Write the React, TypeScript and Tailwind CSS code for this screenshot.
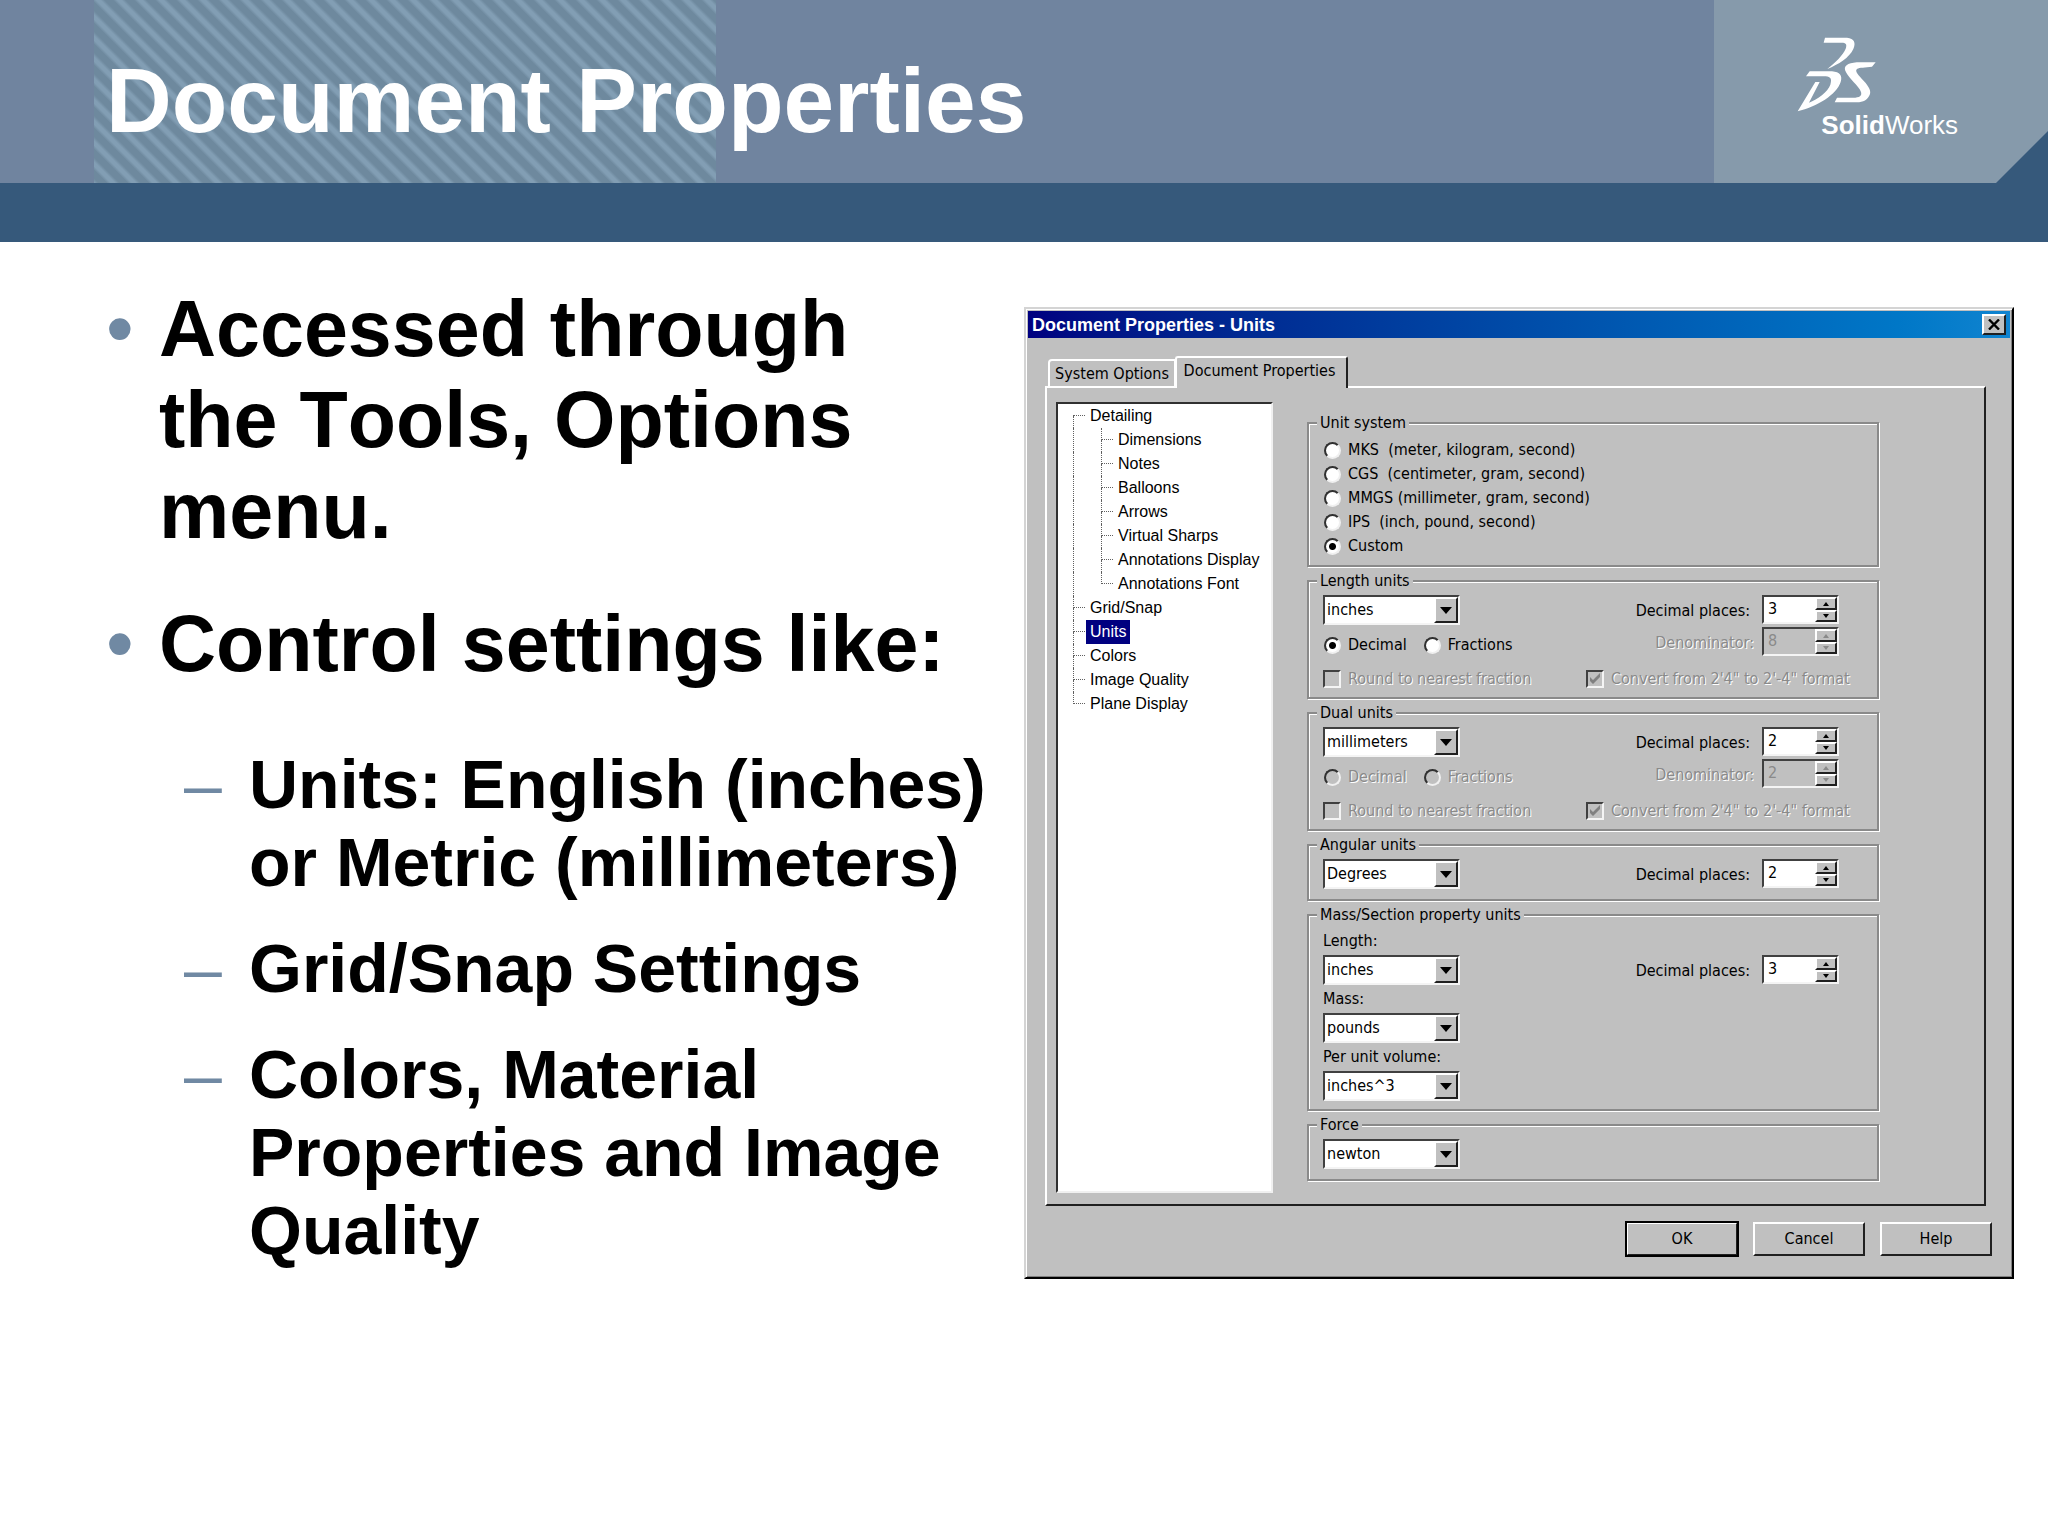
import React, { useState } from "react";
import clsx from "clsx";

const sunken = "border-2 border-t-[#404040] border-l-[#404040] border-b-[#f4f4f4] border-r-[#f4f4f4]";
const raised = "border-2 border-t-white border-l-white border-b-[#202020] border-r-[#202020] bg-[#c0c0c0]";
const disabledText = "text-[#8a8a8a] [text-shadow:1px_1px_0_#fff]";

const Logo: React.FC = () => (
  <svg className="w-[176px] h-[120px]" viewBox="290 105 528 360" fill="#fff" role="img" aria-label="SolidWorks">
    <path d="M374 113H440C462 115 467 128 459 147C447 173 415 193 381 207C405 187 428 166 436 146C441 132 436 128 424 128H370Z" />
    <path d="M526 187L515 200C495 202 476 203 471 206C463 211 470 220 484 236C502 254 513 270 509 282C503 300 488 307 470 307H403L410 293H465C482 292 488 284 478 268C466 250 440 228 434 210C430 194 450 187 480 187Z" />
    <path d="M328 214H395C419 216 427 228 421 246C409 284 350 320 292 334L345 246H358L326 308C352 298 382 276 390 254C395 238 392 230 376 229H317Z" />
    <text x="363" y="402" fontSize="78" fontFamily="'Liberation Sans', sans-serif">
      <tspan fontWeight="700">Solid</tspan>
      <tspan>Works</tspan>
    </text>
  </svg>
);

const SlideHeader: React.FC = () => (
  <header className="bg-[#36597b] pb-[59px]">
    <div className="flex h-[183px] bg-[#70849f]">
      <div className="ml-[94px] w-[622px] flex items-center bg-[length:21px_21px] bg-[linear-gradient(45deg,#7893a9_0%,#829eb4_5%,#829eb4_15%,#6e899e_25%,#6e899e_45%,#829eb4_55%,#829eb4_65%,#6e899e_75%,#6e899e_95%,#7893a9_100%)]">
        <h1 className="ml-3 mt-[18px] text-[91px] leading-[104px] font-bold text-white whitespace-nowrap">
          Document Properties
        </h1>
      </div>
      <div className="ml-auto w-[334px] bg-[#36597b]">
        <div className="h-full pl-[83px] pt-[35px] bg-[#869aab] [clip-path:polygon(0_0,100%_0,100%_131px,282px_100%,0_100%)]">
          <Logo />
        </div>
      </div>
    </div>
  </header>
);

const Bullets: React.FC = () => (
  <ul className="flex flex-col gap-[42px] text-[79px] leading-[91px] font-bold text-black [font-kerning:none]">
    <li className="flex">
      <span className="w-[53px] shrink-0 font-normal text-[#7089a3]">•</span>
      <span>Accessed through the Tools, Options menu.</span>
    </li>
    <li>
      <div className="flex">
        <span className="w-[53px] shrink-0 font-normal text-[#7089a3]">•</span>
        <span>Control settings like:</span>
      </div>
      <ul className="mt-14 ml-[78px] flex flex-col gap-7 text-[68px] leading-[78px]">
        {["Units: English (inches) or Metric (millimeters)", "Grid/Snap Settings", "Colors, Material Properties and Image Quality"].map((text) => (
          <li key={text} className="flex">
            <span className="w-[65px] shrink-0 font-normal text-[#7089a3]">–</span>
            <span>{text}</span>
          </li>
        ))}
      </ul>
    </li>
  </ul>
);

interface TreeItem {
  label: string;
  child?: boolean;
  last?: boolean;
}

const treeItems: TreeItem[] = [
  { label: "Detailing" },
  { label: "Dimensions", child: true },
  { label: "Notes", child: true },
  { label: "Balloons", child: true },
  { label: "Arrows", child: true },
  { label: "Virtual Sharps", child: true },
  { label: "Annotations Display", child: true },
  { label: "Annotations Font", child: true, last: true },
  { label: "Grid/Snap" },
  { label: "Units" },
  { label: "Colors" },
  { label: "Image Quality" },
  { label: "Plane Display", last: true },
];

const Tree: React.FC = () => {
  const [selected, setSelected] = useState("Units");

  return (
    <ul className="w-[217px] shrink-0 bg-white border-2 border-t-[#303030] border-l-[#303030] border-b-[#f0f0f0] border-r-[#f0f0f0] pl-[15px] text-[16px] leading-6">
      {treeItems.map(({ label, child, last }, i) => (
        <li key={label} className="flex h-6">
          {child && <span className="w-7 border-l border-dotted border-[#606060]" />}
          <span className="w-3 flex flex-col">
            <span className={clsx("h-3 border-b border-dotted border-[#606060]", i > 0 && "border-l")} />
            <span className={clsx("h-3 border-dotted border-[#606060]", !last && "border-l")} />
          </span>
          <button
            type="button"
            onClick={() => setSelected(label)}
            className={clsx("ml-px px-1 whitespace-nowrap", selected === label ? "bg-[#000080] text-white" : "text-black")}
          >
            {label}
          </button>
        </li>
      ))}
    </ul>
  );
};

const Group: React.FC<{ title: string; className?: string; children: React.ReactNode }> = ({ title, className, children }) => (
  <fieldset className={clsx("border-2 border-[#8a8a8a] px-[14px] shadow-[1px_1px_0_#fff,inset_1px_1px_0_#fff]", className)}>
    <legend className="-ml-1.5 px-[3px] h-5 leading-5 bg-[#c0c0c0]">{title}</legend>
    {children}
  </fieldset>
);

const Combo: React.FC<{ id: string; label: string; options: string[] }> = ({ id, label, options }) => (
  <span className={clsx("grid w-[137px] h-[30px] bg-white", sunken)}>
    <select id={id} aria-label={label} className="[grid-area:1/1] appearance-none bg-transparent pl-0.5 text-black outline-none">
      {options.map((option) => (
        <option key={option}>{option}</option>
      ))}
    </select>
    <span className={clsx("[grid-area:1/1] justify-self-end w-6 flex items-center justify-center pointer-events-none", raised)}>
      <svg className="w-3 h-[7px]" viewBox="0 0 12 7">
        <path d="M0 0H12L6 7Z" />
      </svg>
    </span>
  </span>
);

const Spinner: React.FC<{ id: string; label: string; value: number; disabled?: boolean }> = ({ id, label, value, disabled }) => {
  const [current, setCurrent] = useState(value);
  const arrow = disabled ? "#8a8a8a" : "#000";

  return (
    <div className="flex items-start">
      <label htmlFor={id} className={clsx("mt-1 leading-6", disabled ? "mr-2 " + disabledText : "mr-3")}>
        {label}
      </label>
      <span className={clsx("flex w-[77px] h-[29px]", sunken, disabled ? "bg-[#c0c0c0]" : "bg-white")}>
        <input
          id={id}
          value={current}
          disabled={disabled}
          onChange={(e) => setCurrent(Number(e.target.value) || 0)}
          className={clsx("w-0 grow pl-1 pb-0.5 bg-transparent outline-none", disabled ? "text-[#8a8a8a]" : "text-black")}
        />
        <span className="w-[22px] flex flex-col">
          <button type="button" aria-label="Increase" disabled={disabled} onClick={() => setCurrent(current + 1)} className={clsx("h-[13px] flex items-center justify-center", raised)}>
            <svg className="w-[6px] h-1" viewBox="0 0 6 4" fill={arrow}>
              <path d="M0 4L3 0L6 4Z" />
            </svg>
          </button>
          <button type="button" aria-label="Decrease" disabled={disabled} onClick={() => setCurrent(current - 1)} className={clsx("h-3 flex items-center justify-center", raised)}>
            <svg className="w-[6px] h-1" viewBox="0 0 6 4" fill={arrow}>
              <path d="M0 0L3 4L6 0Z" />
            </svg>
          </button>
        </span>
      </span>
    </div>
  );
};

interface ToggleProps {
  label: string;
  name?: string;
  checked?: boolean;
  disabled?: boolean;
}

const Radio: React.FC<ToggleProps> = ({ label, name, checked, disabled }) => (
  <label className={clsx("flex items-center whitespace-pre leading-6", disabled && disabledText)}>
    <input
      type="radio"
      name={name}
      defaultChecked={checked}
      disabled={disabled}
      className="appearance-none ml-px mr-[7px] size-[17px] rounded-full border-2 border-t-[#303030] border-l-[#303030] border-b-[#f0f0f0] border-r-[#f0f0f0] bg-white disabled:bg-[#c0c0c0] checked:bg-[radial-gradient(circle,#000_3px,#fff_4px)]"
    />
    {label}
  </label>
);

const Check: React.FC<ToggleProps> = ({ label, checked, disabled }) => (
  <label className={clsx("flex items-center whitespace-nowrap leading-6", disabled && disabledText)}>
    <span className="grid mr-[7px] size-[18px]">
      <input
        type="checkbox"
        defaultChecked={checked}
        disabled={disabled}
        className={clsx("peer [grid-area:1/1] appearance-none bg-white disabled:bg-[#c0c0c0]", sunken)}
      />
      <svg className="[grid-area:1/1] m-[3px] size-3 invisible peer-checked:visible pointer-events-none" viewBox="0 0 12 12">
        <path d="M1 4L4 7L11 0V4L4 11L1 8Z" fill="#808080" />
      </svg>
    </span>
    {label}
  </label>
);

interface LinearUnitsProps {
  title: string;
  id: string;
  options: string[];
  places: number;
  denominator: number;
  formatDisabled?: boolean;
}

// length and dual units share one form; dual has its radio pair disabled
const LinearUnits: React.FC<LinearUnitsProps> = ({ title, id, options, places, denominator, formatDisabled }) => (
  <Group title={title} className="pt-1 pb-0.5">
    <div className="flex h-8 justify-between pr-6">
      <Combo id={id} label={title} options={options} />
      <Spinner id={`${id}-places`} label="Decimal places:" value={places} />
    </div>
    <div className="flex h-9 justify-between pr-6">
      <div className="flex items-center gap-4">
        <Radio name={`${id}-format`} label="Decimal" checked={!formatDisabled} disabled={formatDisabled} />
        <Radio name={`${id}-format`} label="Fractions" disabled={formatDisabled} />
      </div>
      <Spinner id={`${id}-denominator`} label="Denominator:" value={denominator} disabled />
    </div>
    <div className="flex h-8 items-center">
      <div className="w-[263px]">
        <Check label="Round to nearest fraction" disabled />
      </div>
      <Check label={`Convert from 2'4" to 2'-4" format`} checked disabled />
    </div>
  </Group>
);

const UnitsForm: React.FC = () => (
  <div className="grow ml-[34px] mr-[105px] pt-[11px] pb-3 flex flex-col gap-1">
    <Group title="Unit system" className="pt-[5px] pb-[7px]">
      <Radio name="system" label="MKS  (meter, kilogram, second)" />
      <Radio name="system" label="CGS  (centimeter, gram, second)" />
      <Radio name="system" label="MMGS (millimeter, gram, second)" />
      <Radio name="system" label="IPS  (inch, pound, second)" />
      <Radio name="system" label="Custom" checked />
    </Group>
    <LinearUnits title="Length units" id="length" options={["inches", "millimeters"]} places={3} denominator={8} />
    <LinearUnits title="Dual units" id="dual" options={["millimeters", "inches"]} places={2} denominator={2} formatDisabled />
    <Group title="Angular units" className="pt-1 pb-2">
      <div className="flex h-8 justify-between pr-6">
        <Combo id="angular" label="Angular units" options={["Degrees", "Radians"]} />
        <Spinner id="angular-places" label="Decimal places:" value={2} />
      </div>
    </Group>
    <Group title="Mass/Section property units" className="pt-0.5 pb-2">
      <label htmlFor="mass-length" className="block leading-7">Length:</label>
      <div className="flex h-[30px] justify-between pr-6">
        <Combo id="mass-length" label="Length" options={["inches", "millimeters"]} />
        <Spinner id="mass-places" label="Decimal places:" value={3} />
      </div>
      <label htmlFor="mass" className="block leading-7">Mass:</label>
      <Combo id="mass" label="Mass" options={["pounds", "grams"]} />
      <label htmlFor="volume" className="block leading-7">Per unit volume:</label>
      <Combo id="volume" label="Per unit volume" options={["inches^3", "millimeters^3"]} />
    </Group>
    <Group title="Force" className="pt-1 pb-2">
      <div className="h-8">
        <Combo id="force" label="Force" options={["newton", "pound-force"]} />
      </div>
    </Group>
  </div>
);

const DialogButton: React.FC<{ label: string; primary?: boolean }> = ({ label, primary }) => (
  <button type="button" className={clsx("w-[112px] h-[34px]", raised, primary && "outline-2 -outline-offset-1 outline-black")}>
    {label}
  </button>
);

const PropertiesDialog: React.FC = () => (
  <section className="bg-[#c0c0c0] border-2 border-t-[#d4d4d4] border-l-[#d4d4d4] border-b-black border-r-black p-0.5 text-black font-['DejaVu_Sans_Condensed','DejaVu_Sans',sans-serif] text-[16px] shadow-[inset_1px_1px_0_#fff,inset_-1px_-1px_0_#808080]">
    <div className="flex h-[27px] items-center justify-between bg-linear-to-r from-[#000080] to-[#1084d0] pl-1 pr-1">
      <h2 className="font-['Liberation_Sans',sans-serif] text-[18px] leading-6 font-bold text-white">Document Properties - Units</h2>
      <button type="button" aria-label="Close" className={clsx("w-6 h-[21px] flex items-center justify-center", raised)}>
        <svg className="w-3 h-[11px]" viewBox="0 0 12 11" stroke="#000" strokeWidth="2.4">
          <path d="M1 0.5L11 10.5M11 0.5L1 10.5" />
        </svg>
      </button>
    </div>
    <div className="mt-[18px] ml-[17px] mr-6">
      <div role="tablist" className="ml-[3px] flex items-end">
        <button type="button" role="tab" aria-selected="false" className="w-[128px] h-[27px] rounded-tl-[4px] border-2 border-b-0 border-white border-r-white whitespace-nowrap leading-5">
          System Options
        </button>
        <button type="button" role="tab" aria-selected="true" className="relative -mb-0.5 -ml-px w-[173px] h-8 pb-1 pr-1 rounded-t-[3px] border-2 border-b-0 border-white border-r-[#202020] bg-[#c0c0c0] whitespace-nowrap leading-5">
          Document Properties
        </button>
      </div>
      <div className="flex border-2 border-t-white border-l-white border-b-[#202020] border-r-[#202020] pl-[9px] pt-[14px] pb-[11px]">
        <div className="flex font-['Liberation_Sans',sans-serif]">
          <Tree />
        </div>
        <UnitsForm />
      </div>
    </div>
    <div className="flex justify-end gap-[15px] pt-4 pb-[19px] pr-[18px]">
      <DialogButton label="OK" primary />
      <DialogButton label="Cancel" />
      <DialogButton label="Help" />
    </div>
  </section>
);

const App: React.FC = () => {
  return (
    <div className="min-h-screen bg-white font-['Liberation_Sans',sans-serif]">
      <SlideHeader />
      <main className="flex items-start">
        <div className="w-1/2 pl-[106px] pr-9 pt-[41px]">
          <Bullets />
        </div>
        <div className="w-1/2 pr-[34px] pt-[65px]">
          <PropertiesDialog />
        </div>
      </main>
    </div>
  );
};

export default App;
